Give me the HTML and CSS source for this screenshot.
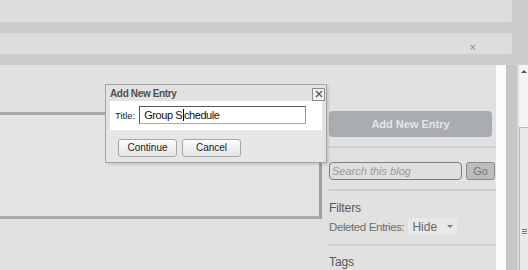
FILE: index.html
```html
<!DOCTYPE html>
<html>
<head>
<meta charset="utf-8">
<link rel="stylesheet" href="styles.css">
</head>
<body>
<div class="page">
  <div class="bar bar-top"></div>
  <div class="bar bar-second"><span class="bar-close">×</span></div>
  <div class="main">
    <div class="content">
      <div class="left">
        <div class="editor-box"></div>
      </div>
      <div class="sidebar">
        <div class="add-btn">Add New Entry</div>
        <div class="divider"></div>
        <div class="search-row">
          <div class="search-input">Search this blog</div>
          <div class="go-btn">Go</div>
        </div>
        <div class="divider"></div>
        <div class="heading">Filters</div>
        <div class="filter-row">
          <span class="filter-label">Deleted Entries:</span>
          <span class="select">Hide <span class="caret"></span></span>
        </div>
        <div class="divider"></div>
        <div class="heading tags">Tags</div>
      </div>
    </div>
    <div class="white-strip"></div>
    <div class="gray-strip"></div>
    <div class="scrollbar">
      <div class="scroll-top"><span class="arrow"></span></div>
      <div class="scroll-thumb"><span class="grip"></span></div>
    </div>
  </div>

  <div class="dialog">
    <div class="dialog-title">
      <span>Add New Entry</span>
      <span class="dialog-close">
        <svg width="8" height="8" viewBox="0 0 8 8"><path d="M1 1L7 7M7 1L1 7" stroke="#555" stroke-width="1.2" fill="none"/></svg>
      </span>
    </div>
    <div class="dialog-row">
      <span class="field-label">Title:</span>
      <div class="field-input">Group S<span class="cursor"></span>chedule</div>
    </div>
    <div class="dialog-buttons">
      <div class="btn">Continue</div>
      <div class="btn">Cancel</div>
    </div>
  </div>
</div>
</body>
</html>
```

FILE: styles.css
```css
html, body {
  margin: 0;
  padding: 0;
}
body {
  background: #cdcdcd;
  font-family: "Liberation Sans", Arial, sans-serif;
  width: 528px;
  height: 270px;
  overflow: hidden;
}
.page {
  position: relative;
  width: 528px;
  height: 270px;
}
.bar {
  width: 512px;
  background: #dddddd;
  border-radius: 0 3px 3px 0;
  box-sizing: border-box;
}
.bar-top {
  height: 22px;
  margin-bottom: 11px;
}
.bar-second {
  height: 21px;
  margin-bottom: 11px;
  display: flex;
  justify-content: flex-end;
  align-items: center;
  padding-right: 36px;
  padding-top: 6px;
}
.bar-close {
  font-size: 11px;
  color: #888;
  line-height: 10px;
}
.main {
  display: flex;
  height: 205px;
}
.content {
  width: 496px;
  background: #e1e1e1;
  display: flex;
}
.left {
  width: 322px;
  padding-top: 47px;
}
.editor-box {
  height: 101px;
  border-top: 3px solid #a9a9a9;
  border-bottom: 3px solid #a9a9a9;
  border-right: 3px solid #9e9e9e;
  background: #e4e4e4;
}
.sidebar {
  margin-left: 7px;
  width: 167px;
  padding-top: 46px;
  color: #555;
}
.add-btn {
  width: 163px;
  height: 26px;
  background: #a9acb1;
  border-radius: 4px;
  color: #e4e6ea;
  font-weight: bold;
  font-size: 11px;
  line-height: 27px;
  text-align: center;
}
.divider {
  height: 2px;
  background: #cfcfcf;
  margin: 9px 0 0 0;
}
.search-row {
  display: flex;
  margin-top: 14px;
  gap: 4px;
}
.search-input {
  width: 129px;
  height: 16px;
  border: 1px solid #7c7c7c;
  border-radius: 4px;
  background: #dfdfdf;
  font-size: 11px;
  font-style: italic;
  color: #9a9a9a;
  line-height: 16px;
  padding-left: 2px;
}
.search-row + .divider {
  margin-top: 9px;
}
.go-btn {
  width: 27px;
  height: 16px;
  border: 1px solid #8a8a8a;
  border-radius: 3px;
  background: #bcbcbc;
  color: #777;
  font-size: 11px;
  line-height: 16px;
  text-align: center;
}
.heading {
  font-size: 12px;
  margin-top: 10px;
  color: #555;
  letter-spacing: -0.1px;
}
.filter-row {
  display: flex;
  align-items: center;
  margin-top: 3px;
  font-size: 11.5px;
  letter-spacing: -0.4px;
  color: #6e6e6e;
}
.filter-label {
  margin-right: 4px;
}
.select {
  display: inline-flex;
  align-items: center;
  height: 17px;
  width: 45px;
  padding-left: 4px;
  background: #e9e9e9;
  color: #666;
  font-size: 12px;
  letter-spacing: 0;
}
.caret {
  width: 0;
  height: 0;
  border-left: 3px solid transparent;
  border-right: 3px solid transparent;
  border-top: 3px solid #777;
  margin-left: 10px;
}
.filter-row + .divider {
  margin-top: 9px;
}
.tags {
  margin-top: 9px;
}
.white-strip {
  width: 10px;
  background: #fbfbfb;
}
.gray-strip {
  width: 11px;
  background: #c6c6c6;
  border-right: 2px solid #d8d8d8;
}
.scrollbar {
  width: 9px;
  background: #e6e6e6;
  display: flex;
  flex-direction: column;
}
.scroll-top {
  height: 63px;
  background: #f5f5f5;
  border-bottom: 1px solid #bdbdbd;
  display: flex;
  justify-content: center;
  padding-top: 5px;
  box-sizing: border-box;
}
.arrow {
  width: 0;
  height: 0;
  border-left: 3px solid transparent;
  border-right: 3px solid transparent;
  border-bottom: 3px solid #555;
}
.scroll-thumb {
  flex: 1;
  background: #e9e9e9;
  border-left: 1px solid #b9b9b9;
  position: relative;
}
.grip {
  position: absolute;
  left: 2px;
  top: 101px;
  width: 5px;
  height: 5px;
  background: repeating-linear-gradient(#777 0 1px, transparent 1px 2px);
}
.dialog {
  position: absolute;
  left: 105px;
  top: 84px;
  width: 222px;
  height: 79px;
  box-sizing: border-box;
  border: 1px solid #a3a3a3;
  background: #e2e2e2;
  box-shadow: 2px 2px 2px rgba(0,0,0,0.12);
}
.dialog-title {
  height: 16px;
  display: flex;
  align-items: center;
  justify-content: space-between;
  padding: 0 1px 0 4px;
  font-size: 10px;
  letter-spacing: -0.35px;
  font-weight: bold;
  color: #505050;
}
.dialog-close {
  width: 11px;
  height: 11px;
  border: 1px solid #8d8d8d;
  background: #f1f1f1;
  display: flex;
  align-items: center;
  justify-content: center;
  margin-top: 2px;
}
.dialog-row {
  margin: 0 4px 0 4px;
  height: 29px;
  background: #ffffff;
  display: flex;
  align-items: center;
  padding-left: 5px;
  padding-bottom: 1px;
  box-sizing: border-box;
}
.field-label {
  font-size: 9.5px;
  color: #222;
  margin-right: 4px;
}
.field-input {
  width: 167px;
  height: 18px;
  box-sizing: border-box;
  border: 1px solid #555;
  border-right-color: #999;
  border-bottom-color: #aaa;
  font-size: 11px;
  letter-spacing: -0.45px;
  color: #111;
  line-height: 16px;
  padding-left: 4px;
  display: flex;
  align-items: center;
}
.cursor {
  display: inline-block;
  width: 1px;
  height: 12px;
  background: #000;
  margin: 0 0.5px;
}
.dialog-buttons {
  display: flex;
  gap: 5px;
  padding: 9px 0 0 12px;
  background: #e6e6e6;
  height: 32px;
  margin: 0 4px 0 0;
  box-sizing: border-box;
}
.btn {
  width: 59px;
  height: 18px;
  box-sizing: border-box;
  border: 1px solid #a6a6a6;
  border-radius: 3px;
  background: linear-gradient(#fdfdfd, #e4e4e4);
  font-size: 10px;
  color: #222;
  text-align: center;
  line-height: 16px;
}
```
